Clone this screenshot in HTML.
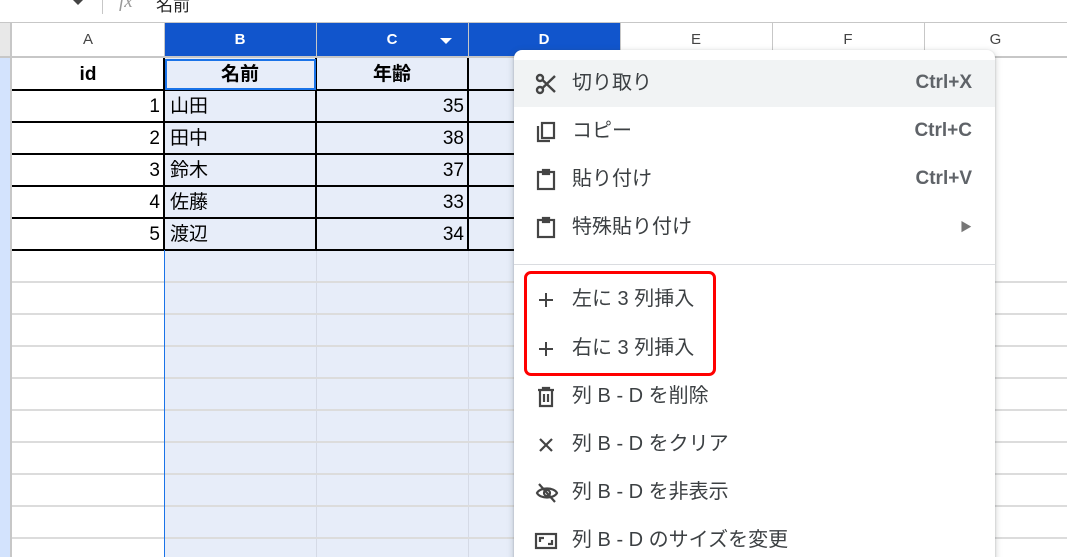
<!DOCTYPE html>
<html style="overflow:hidden;width:1067px;height:557px"><head><meta charset="utf-8"><style>
*{margin:0;padding:0;box-sizing:border-box}
body{width:1067px;height:557px;overflow:hidden;background:#fff;position:relative;font-family:"Liberation Sans","Noto Sans CJK JP",sans-serif}
.a{position:absolute}
.hl{position:absolute;left:12px;right:0;height:2px;background:#dcdcdc}
.vl{position:absolute;top:58px;bottom:0;width:1px;background:#dcdcdc}
.ch{position:absolute;top:23px;height:34px;line-height:34px;text-align:center;font-size:15px;color:#444}
.sel{background:#1155cc;color:#fff;font-weight:bold}
.cell{position:absolute;height:31px;line-height:33px;font-size:19px;color:#000}
.mi{position:absolute;left:514px;width:481px;height:48px;line-height:48px;font-size:20px;color:#3c4043}
.mi svg{position:absolute;left:20px;top:13px}
.mi .t{position:absolute;left:58px}
.mi .k{position:absolute;right:23px;font-size:19px;font-weight:bold;color:#5f6368}
</style></head><body>
<div class="a" style="left:0;top:0;width:1067px;height:22px;background:#fff"></div>
<div class="a" style="left:73px;top:0;width:0;height:0;border-left:5px solid transparent;border-right:5px solid transparent;border-top:5px solid #444"></div>
<div class="a" style="left:102px;top:0;width:1px;height:14px;background:#c7c7c7"></div>
<div class="a" style="left:119px;top:-9px;font-size:19px;font-style:italic;color:#999;font-family:'Liberation Serif',serif">fx</div>
<div class="a" style="left:156px;top:-9px;font-size:17px;color:#222">名前</div>
<div class="a" style="left:0;top:22px;width:1067px;height:1px;background:#c7c7c7"></div>
<div class="a" style="left:0;top:23px;width:10px;height:35px;background:#e8e8e8"></div>
<div class="a" style="left:0;top:58px;width:10px;height:499px;background:#d3e3fd"></div>
<div class="a" style="left:10px;top:23px;width:2px;height:534px;background:#c7c7c7"></div>
<div class="a" style="left:164px;top:58px;width:456px;height:499px;background:#e7edf9"></div>
<div class="vl" style="left:316px;background:#d5dae6"></div>
<div class="vl" style="left:468px;background:#d5dae6"></div>
<div class="vl" style="left:620px"></div>
<div class="vl" style="left:772px"></div>
<div class="vl" style="left:924px"></div>
<div class="hl" style="top:281px"></div><div class="hl" style="top:313px"></div><div class="hl" style="top:345px"></div><div class="hl" style="top:377px"></div><div class="hl" style="top:409px"></div><div class="hl" style="top:441px"></div><div class="hl" style="top:473px"></div><div class="hl" style="top:505px"></div><div class="hl" style="top:537px"></div>
<div class="ch" style="left:12px;width:152px;background:#fff">A</div>
<div class="ch sel" style="left:164px;width:152px">B</div>
<div class="ch sel" style="left:316px;width:152px">C<span class="a" style="left:124px;top:15px;width:0;height:0;border-left:6px solid transparent;border-right:6px solid transparent;border-top:6px solid #fff"></span></div>
<div class="ch sel" style="left:468px;width:152px">D</div>
<div class="ch" style="left:620px;width:152px;background:#fff">E</div>
<div class="ch" style="left:772px;width:152px;background:#fff">F</div>
<div class="ch" style="left:924px;width:143px;background:#fff">G</div>
<div class="a" style="left:164px;top:23px;width:1px;height:34px;background:#c7c7c7"></div>
<div class="a" style="left:316px;top:23px;width:1px;height:34px;background:#c7c7c7"></div>
<div class="a" style="left:468px;top:23px;width:1px;height:34px;background:#c7c7c7"></div>
<div class="a" style="left:620px;top:23px;width:1px;height:34px;background:#c7c7c7"></div>
<div class="a" style="left:772px;top:23px;width:1px;height:34px;background:#c7c7c7"></div>
<div class="a" style="left:924px;top:23px;width:1px;height:34px;background:#c7c7c7"></div>
<div class="a" style="left:0;top:56px;width:1067px;height:2px;background:#c7c7c7"></div>
<div class="a" style="left:12px;top:89px;width:502px;height:2px;background:#000"></div>
<div class="a" style="left:12px;top:121px;width:502px;height:2px;background:#000"></div>
<div class="a" style="left:12px;top:153px;width:502px;height:2px;background:#000"></div>
<div class="a" style="left:12px;top:185px;width:502px;height:2px;background:#000"></div>
<div class="a" style="left:12px;top:217px;width:502px;height:2px;background:#000"></div>
<div class="a" style="left:12px;top:249px;width:502px;height:2px;background:#000"></div>
<div class="a" style="left:163px;top:58px;width:2px;height:192px;background:#000"></div>
<div class="a" style="left:315px;top:58px;width:2px;height:192px;background:#000"></div>
<div class="a" style="left:467px;top:58px;width:2px;height:192px;background:#000"></div>
<div class="a" style="left:164px;top:250px;width:1px;height:307px;background:#1a73e8"></div>
<div class="a" style="left:165px;top:59px;width:151px;height:31px;border:2px solid #1a73e8"></div>
<div class="cell" style="left:12px;top:58px;width:152px;text-align:center;font-weight:bold">id</div>
<div class="cell" style="left:164px;top:58px;width:152px;text-align:center;font-weight:bold">名前</div>
<div class="cell" style="left:316px;top:58px;width:152px;text-align:center;font-weight:bold">年齢</div>
<div class="cell" style="left:12px;top:90px;width:148px;text-align:right">1</div>
<div class="cell" style="left:12px;top:122px;width:148px;text-align:right">2</div>
<div class="cell" style="left:12px;top:154px;width:148px;text-align:right">3</div>
<div class="cell" style="left:12px;top:186px;width:148px;text-align:right">4</div>
<div class="cell" style="left:12px;top:218px;width:148px;text-align:right">5</div>
<div class="cell" style="left:170px;top:90px">山田</div>
<div class="cell" style="left:170px;top:122px">田中</div>
<div class="cell" style="left:170px;top:154px">鈴木</div>
<div class="cell" style="left:170px;top:186px">佐藤</div>
<div class="cell" style="left:170px;top:218px">渡辺</div>
<div class="cell" style="left:316px;top:90px;width:148px;text-align:right">35</div>
<div class="cell" style="left:316px;top:122px;width:148px;text-align:right">38</div>
<div class="cell" style="left:316px;top:154px;width:148px;text-align:right">37</div>
<div class="cell" style="left:316px;top:186px;width:148px;text-align:right">33</div>
<div class="cell" style="left:316px;top:218px;width:148px;text-align:right">34</div>
<div class="a" style="left:514px;top:50px;width:481px;height:520px;background:#fff;border-radius:8px;box-shadow:0 2px 6px 2px rgba(60,64,67,.15),0 1px 2px rgba(60,64,67,.3)"></div>
<div class="a" style="left:514px;top:60px;width:481px;height:47px;background:#f1f3f4"></div>
<div class="mi" style="top:59px"><svg width="24" height="24" viewBox="0 0 24 24" fill="none" stroke="#444" stroke-width="2.4"><circle cx="6" cy="6" r="3"/><circle cx="6" cy="18" r="3"/><path d="M8.5 8 L21 20 M8.5 16 L21 4"/></svg><span class="t">切り取り</span><span class="k">Ctrl+X</span></div>
<div class="mi" style="top:107px"><svg width="24" height="24" viewBox="0 0 24 24" fill="none" stroke="#444" stroke-width="2.2"><rect x="8" y="3" width="12" height="15"/><path d="M4 6 V21 H16"/></svg><span class="t">コピー</span><span class="k">Ctrl+C</span></div>
<div class="mi" style="top:155px"><svg width="24" height="24" viewBox="0 0 24 24" fill="none" stroke="#444" stroke-width="2.2"><rect x="4" y="4" width="16" height="17"/><rect x="9" y="2" width="6" height="4" fill="#444"/></svg><span class="t">貼り付け</span><span class="k">Ctrl+V</span></div>
<div class="mi" style="top:203px"><svg width="24" height="24" viewBox="0 0 24 24" fill="none" stroke="#444" stroke-width="2.2"><rect x="4" y="4" width="16" height="17"/><rect x="9" y="2" width="6" height="4" fill="#444"/></svg><span class="t">特殊貼り付け</span><span class="k" style="font-size:12px;color:#777">▶</span></div>
<div class="a" style="left:514px;top:264px;width:481px;height:1px;background:#dadce0"></div>
<div class="mi" style="top:275px"><svg width="24" height="24" viewBox="0 0 24 24" stroke="#444" stroke-width="2"><path d="M12 5V19M5 12H19"/></svg><span class="t">左に 3 列挿入</span></div>
<div class="mi" style="top:324px"><svg width="24" height="24" viewBox="0 0 24 24" stroke="#444" stroke-width="2"><path d="M12 5V19M5 12H19"/></svg><span class="t">右に 3 列挿入</span></div>
<div class="a" style="left:524px;top:271px;width:192px;height:105px;border:3px solid #f00;border-radius:7px"></div>
<div class="mi" style="top:372px"><svg width="24" height="24" viewBox="0 0 24 24" fill="none" stroke="#444" stroke-width="2.2"><path d="M4 5H20M9 5V3H15V5M6 5V21H18V5M10 9V17M14 9V17"/></svg><span class="t">列 B - D を削除</span></div>
<div class="mi" style="top:420px"><svg width="24" height="24" viewBox="0 0 24 24" stroke="#444" stroke-width="2.2"><path d="M6 6L18 18M18 6L6 18"/></svg><span class="t">列 B - D をクリア</span></div>
<div class="mi" style="top:468px"><svg width="26" height="24" viewBox="0 0 24 24" fill="none" stroke="#444" stroke-width="2.2"><path d="M2 12C5 6 19 6 22 12C19 18 5 18 2 12Z"/><circle cx="12" cy="12" r="3"/><path d="M4 3L20 21"/></svg><span class="t">列 B - D を非表示</span></div>
<div class="mi" style="top:516px"><svg width="24" height="24" viewBox="0 0 24 24" fill="none" stroke="#444" stroke-width="2.2"><rect x="2" y="5" width="20" height="14"/><path d="M6 13V9H10M18 11V15H14"/></svg><span class="t">列 B - D のサイズを変更</span></div>
</body></html>
